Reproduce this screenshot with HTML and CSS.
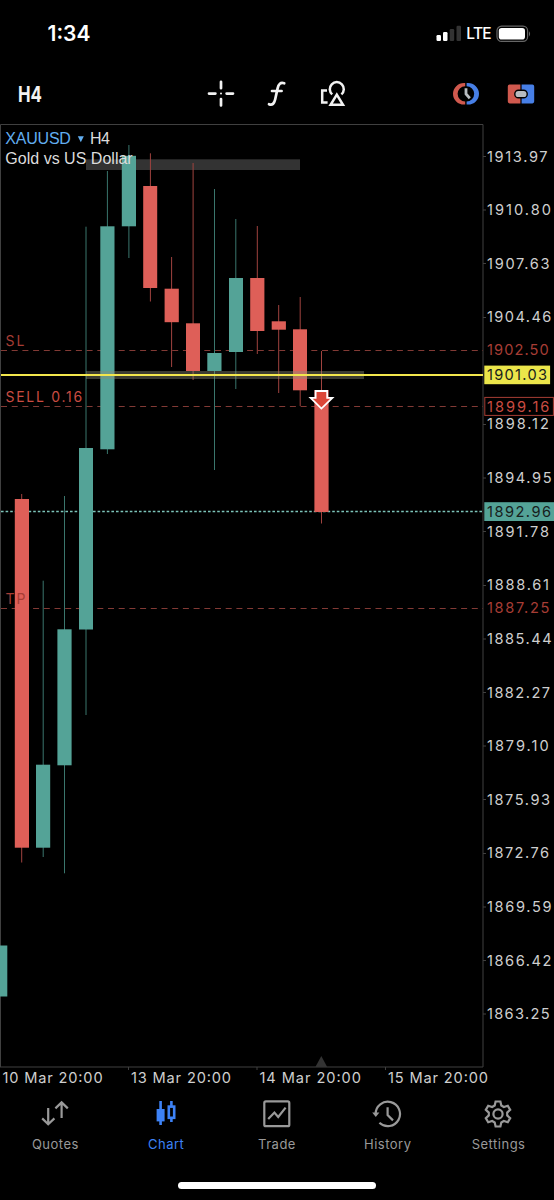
FILE: index.html
```html
<!DOCTYPE html>
<html lang="en">
  <head>
    <meta charset="utf-8" />
    <title>XAUUSD H4</title>
    <link rel="stylesheet" href="styles.css">
  </head>
  <body>
    <div class="status-bar">
      <div class="clock">1:34</div>
      <div class="status-icons">
        <svg width="26" height="17" viewBox="0 0 26 17">
          <rect class="signal on" x="0.5" y="10" width="4.5" height="6" rx="1.2" />
          <rect class="signal on" x="7" y="7" width="4.5" height="9" rx="1.2" />
          <rect class="signal" x="13.7" y="4" width="4.5" height="12" rx="1.2" />
          <rect class="signal" x="20.5" y="0.8" width="4.5" height="15.2" rx="1.2" />
        </svg>
        <span class="network">LTE</span>
        <svg width="36" height="18" viewBox="0 0 36 18">
          <rect class="battery-case" x="1" y="1.2" width="30.6" height="15.2" rx="4.6" />
          <rect x="2.8" y="3" width="26.2" height="11.6" rx="2.8" fill="#fff" />
          <path d="M33 6.2 Q35.2 8.8 33 11.4 Z" fill="#666" />
        </svg>
      </div>
    </div>

    <div class="toolbar">
      <svg class="timeframe" width="34" height="34" viewBox="0 0 34 34">
        <text x="4" y="24.5" textLength="24" lengthAdjust="spacingAndGlyphs">H4</text>
      </svg>
      <div class="tools">
        <svg width="28" height="28" viewBox="0 0 28 28">
          <path class="line" d="M14 1.8V8.2M14 19V25.4M2 13.6H8.4M19.6 13.6H26" />
          <circle cx="14" cy="13.6" r="1" fill="#f2f2f2" />
        </svg>
        <svg width="20" height="28" viewBox="0 0 20 28">
          <path class="line" d="M2 24.2C5.4 25.6 7.2 23.6 8.2 19.2L10.6 8.4C11.6 3.8 13.4 2.2 17.2 3.3M5 11H14.6" />
        </svg>
        <svg width="28" height="28" viewBox="0 0 28 28">
          <path class="line thin" d="M8 10.6H3.2V22.6H8.6" />
          <path class="line thin" d="M13.2 14.4A7 7 0 1 1 22.4 14.4" />
          <path class="line thin" d="M17.8 14.6L24 24.8H11.6Z" />
        </svg>
      </div>
      <div class="trade-tools">
        <svg width="28" height="24" viewBox="0 0 28 24">
          <path d="M13.2 1H12A11 10.8 0 0 0 12 22.6H13.2V19.4A7.6 7.6 0 0 1 13.2 4.2Z" fill="#d0594e" />
          <path d="M14.6 1H16A11 10.8 0 0 1 16 22.6H14.6V19.4A7.6 7.6 0 0 0 14.6 4.2Z" fill="#477fe6" />
          <path class="hand" d="M14 6.2V12L17.8 16.2" />
        </svg>
        <svg width="28" height="20" viewBox="0 0 28 20">
          <path d="M2.6 0.6H13.4V19.4H2.6A1.8 1.8 0 0 1 0.8 17.6V2.4A1.8 1.8 0 0 1 2.6 0.6Z" fill="#d0594e" />
          <path d="M14.6 0.6H25.4A1.8 1.8 0 0 1 27.2 2.4V17.6A1.8 1.8 0 0 1 25.4 19.4H14.6Z" fill="#477fe6" />
          <rect class="lens" x="7.8" y="6.2" width="12.4" height="7.6" rx="3.6" />
        </svg>
      </div>
    </div>

    <svg class="chart" width="554" height="972" viewBox="0 120 554 972">
      <!-- frame -->
      <path class="frame" d="M0.5 1067V124.5H483V1067H0" />
      <path class="frame" d="M128.5 1067v3M257 1067v3M385.5 1067v3" />
      <path class="frame" d="M483 156.5h3M483 210h3M483 263.5h3M483 317.5h3M483 424.5h3M483 478h3M483 531.5h3M483 585.5h3M483 639h3M483 692.5h3M483 746h3M483 799.5h3M483 853.5h3M483 907h3M483 960.5h3M483 1014h3" />

      <!-- order levels -->
      <path class="level" d="M1 350.5H483M1 406.5H483M1 608.5H483" />
      <path class="bid" d="M1 511.5H483" />

      <!-- zones -->
      <rect x="86" y="159.3" width="214" height="10.7" fill="#333" />

      <!-- candles -->
      <g class="wick up">
        <path d="M43.2 580.7V857M64.5 496V873.3M86 226.7V715M107.4 171V454M128.9 145V258M214.5 189V470M235.8 219V389" />
      </g>
      <g class="wick down">
        <path d="M21.7 494V862.5M150.4 153.3V301.5M171.6 257V367M193.1 163V380M257.3 226V354M278.7 305V393M300.2 297V406M321.5 351V523.5" />
      </g>
      <g class="up-body">
        <rect x="0" y="945.5" width="7.3" height="51" />
        <rect x="36" y="764.7" width="14.2" height="83" />
        <rect x="57.4" y="629.3" width="14.2" height="136" />
        <rect x="79" y="448" width="14" height="181.5" />
        <rect x="100.3" y="226.3" width="14.2" height="223" />
        <rect x="121.8" y="155.8" width="14.2" height="70.5" />
        <rect x="207.3" y="353" width="14.2" height="18" />
        <rect x="229" y="278" width="14" height="74" />
      </g>
      <g class="down-body">
        <rect x="14.8" y="499" width="14.2" height="348.7" />
        <rect x="143.2" y="186" width="14" height="102" />
        <rect x="164.6" y="288.7" width="14.2" height="33.5" />
        <rect x="186" y="323.3" width="14" height="47.7" />
        <rect x="250.2" y="278" width="14.2" height="53" />
        <rect x="271.7" y="321.3" width="14.2" height="8.4" />
        <rect x="293" y="329.3" width="14" height="61" />
        <rect x="314.4" y="390" width="14.2" height="122" />
      </g>

      <rect x="86" y="371" width="278" height="8" fill="#8c8c78" fill-opacity="0.42" />
      <path class="price-line" d="M1 375H483" />

      <path class="sell-arrow" d="M315.6 391H327.2V397.8H332.4L321.4 408.6L310.6 397.8H315.6Z" />
      <path d="M321.3 1056L327.2 1067H315.4Z" fill="#333" />

      <!-- titles -->
      <text class="title symbol" x="5.3" y="143.6" textLength="65.6">XAUUSD</text>
      <path d="M77.8 136.2H83.8L80.8 142.2Z" fill="#62aef0" />
      <text class="title" x="90" y="143.6" textLength="20">H4</text>
      <text class="title" x="5.3" y="163.6" textLength="127.4">Gold vs US Dollar</text>
      <g class="order">
        <text x="5.5" y="345.8" textLength="19">SL</text>
        <text class="bright" x="5.5" y="402.2" textLength="76.6">SELL 0.16</text>
        <text x="5.5" y="603.6" textLength="20">TP</text>
      </g>

      <!-- price scale -->
      <g class="scale">
        <text x="487" y="161.6" textLength="60.6">1913.97</text>
        <text x="487" y="215.2" textLength="64">1910.80</text>
        <text x="487" y="268.8" textLength="62.6">1907.63</text>
        <text x="487" y="322.2" textLength="64.4">1904.46</text>
        <text x="487" y="429.4" textLength="61.8">1898.12</text>
        <text x="487" y="483" textLength="64.6">1894.95</text>
        <text x="487" y="536.8" textLength="62">1891.78</text>
        <text x="487" y="590.4" textLength="62">1888.61</text>
        <text x="487" y="644" textLength="64.6">1885.44</text>
        <text x="487" y="697.6" textLength="63">1882.27</text>
        <text x="487" y="751.2" textLength="61.6">1879.10</text>
        <text x="487" y="804.8" textLength="63">1875.93</text>
        <text x="487" y="858.4" textLength="62">1872.76</text>
        <text x="487" y="912.2" textLength="64.6">1869.59</text>
        <text x="487" y="965.8" textLength="64.4">1866.42</text>
        <text x="487" y="1019.4" textLength="62.6">1863.25</text>
        <text class="stop" x="487" y="355.4" textLength="61.6">1902.50</text>
        <text class="stop" x="487" y="613.4" textLength="62.4">1887.25</text>

        <rect x="484.3" y="365.6" width="65.8" height="18.6" fill="#ebe54a" />
        <text class="dark" x="487" y="380.4" textLength="60">1901.03</text>
        <rect class="entry-box" x="484.8" y="397.4" width="68.6" height="18" />
        <text class="bright" x="487" y="411.8" textLength="62.4">1899.16</text>
        <rect x="484.3" y="502.2" width="69.7" height="18.8" fill="#54a397" />
        <text class="dark" x="487" y="516.8" textLength="64">1892.96</text>
      </g>

      <g class="scale">
        <text x="2.6" y="1083" textLength="100">10 Mar 20:00</text>
        <text x="131" y="1083" textLength="100">13 Mar 20:00</text>
        <text x="259.4" y="1083" textLength="101.6">14 Mar 20:00</text>
        <text x="388" y="1083" textLength="100">15 Mar 20:00</text>
      </g>
    </svg>

    <div class="tabs">
      <div class="tab">
        <svg width="28" height="28" viewBox="0 0 28 28">
          <path d="M7.2 8V24M1.2 18.4L7.2 24.2L13.4 18.4M20.6 18V2.4M14.4 8.4L20.6 2.4L26.8 8.4" />
        </svg>
        <span>Quotes</span>
      </div>
      <div class="tab active">
        <svg width="28" height="28" viewBox="0 0 28 28">
          <path class="thick" d="M8.6 1V25M19.4 1V6M19.4 18.4V22" />
          <rect x="4.6" y="9" width="8" height="12.4" fill="#3d82f6" stroke="none" />
          <rect class="thick" x="16.8" y="6.6" width="5.4" height="11.2" />
        </svg>
        <span>Chart</span>
      </div>
      <div class="tab">
        <svg width="28" height="28" viewBox="0 0 28 28">
          <rect x="1.3" y="1.4" width="25" height="24.8" rx="1.5" />
          <path d="M5.2 19L11.4 12.6L15.2 17L22.6 7.6" />
        </svg>
        <span>Trade</span>
      </div>
      <div class="tab">
        <svg width="32" height="28" viewBox="0 0 32 28">
          <path d="M3.6 14A12.2 12.2 0 1 1 7.4 22.8M15.6 7.2V15L21 20.4" />
          <path d="M0.2 12.6H7.4L3.8 17Z" fill="#999" stroke="none" />
        </svg>
        <span>History</span>
      </div>
      <div class="tab">
        <svg width="30" height="28" viewBox="0 0 30 28">
          <path d="M11.6 1.5H16.4L17.3 5.5L19.8 7L23.8 5.7L26.2 9.9L23.2 12.6V15.4L26.2 18.1L23.8 22.3L19.8 21L17.3 22.5L16.4 26.5H11.6L10.7 22.5L8.2 21L4.2 22.3L1.8 18.1L4.8 15.4V12.6L1.8 9.9L4.2 5.7L8.2 7L10.7 5.5Z" />
          <circle cx="14" cy="14" r="4.6" />
        </svg>
        <span>Settings</span>
      </div>
    </div>
    <div class="home-bar"></div>
  </body>
</html>
```
FILE: styles.css
```css
body {
  margin: 0;
  width: 554px;
  height: 1200px;
  background: #000;
  color: #fff;
  font-family: Inter, sans-serif;
  overflow: hidden;
}
svg {
  display: block;
}
.status-bar {
  display: flex;
  justify-content: space-between;
  align-items: center;
  box-sizing: border-box;
  height: 67px;
  padding: 0 22px 0 47.5px;
}
.clock {
  font-size: 21px;
  font-weight: 600;
}
.status-icons {
  display: flex;
  align-items: center;
}
.signal {
  fill: #333;
}
.signal.on {
  fill: #fff;
}
.network {
  margin: 0 5px 0 4px;
  font-size: 15.5px;
  font-weight: 500;
  letter-spacing: -0.7px;
}
.battery-case {
  fill: none;
  stroke: #666;
  stroke-width: 1.2;
}
.toolbar {
  display: flex;
  align-items: center;
  justify-content: space-between;
  box-sizing: border-box;
  height: 53px;
  padding: 0 19px 0 14px;
}
.timeframe {
  font-size: 22px;
  font-weight: 700;
  fill: #f2f2f2;
}
.tools {
  display: flex;
  gap: 32px;
  margin-left: 53px;
}
.trade-tools {
  display: flex;
  align-items: center;
  gap: 27px;
}
.line {
  fill: none;
  stroke: #f2f2f2;
  stroke-width: 2.7;
  stroke-linecap: round;
}
.line.thin {
  stroke-width: 2.5;
  stroke-linecap: butt;
}
.hand {
  fill: none;
  stroke: #b8bcc0;
  stroke-width: 2.8;
}
.lens {
  fill: #b8bcc0;
  stroke: #000;
  stroke-width: 1.4;
}
.frame {
  fill: none;
  stroke: #404040;
}
.level {
  stroke: #823a35;
  stroke-dasharray: 6 4.7;
}
.bid {
  stroke: #7cc4b9;
  stroke-width: 1.3;
  stroke-dasharray: 2.6 2;
}
.wick.up {
  stroke: #3a766d;
}
.wick.down {
  stroke: #a0433f;
}
.up-body {
  fill: #54a397;
}
.down-body {
  fill: #de5f58;
}
.price-line {
  stroke: #f2e64c;
  stroke-width: 2;
}
.sell-arrow {
  fill: #dc4638;
  stroke: #fff;
  stroke-width: 1.8;
}
.title {
  font-family: "Liberation Sans", Arial, sans-serif;
  font-size: 16px;
  fill: #dcdcdc;
}
.title.symbol {
  fill: #62aef0;
}
.order {
  font-size: 14px;
  fill: #a63d35;
}
.scale {
  font-size: 14.6px;
  fill: #cfcfcf;
}
.scale .stop {
  fill: #a63d35;
}
.scale .bright,
.order .bright {
  fill: #c94c42;
}
.scale .dark {
  fill: #17201c;
}
.entry-box {
  fill: none;
  stroke: #a63d35;
}
.tabs {
  display: flex;
  box-sizing: border-box;
  height: 90px;
  padding-top: 8px;
}
.tab {
  flex: 1;
  display: flex;
  flex-direction: column;
  align-items: center;
  gap: 8px;
  color: #999;
  font-size: 13px;
  letter-spacing: 0.5px;
}
.tab svg {
  fill: none;
  stroke: #999;
  stroke-width: 2.2;
}
.tab.active {
  color: #3d82f6;
}
.tab.active svg {
  stroke: #3d82f6;
}
.tab .thick {
  stroke-width: 2.6;
}
.home-bar {
  width: 198px;
  height: 7px;
  margin: 0 auto;
  border-radius: 4px;
  background: #fff;
}
```
